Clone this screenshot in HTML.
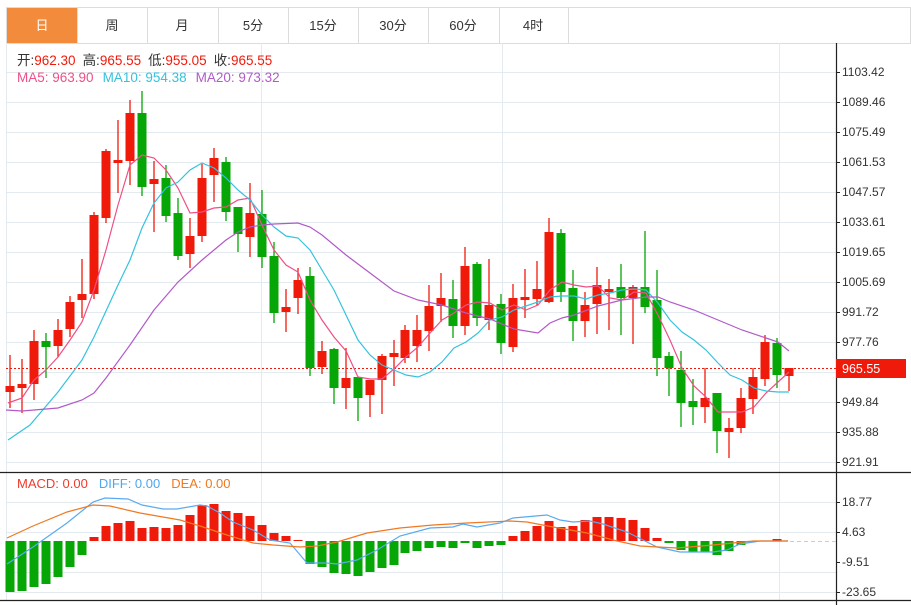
<!DOCTYPE html>
<html><head><meta charset="utf-8"><style>
body{margin:0;background:#fff;width:911px;height:605px;overflow:hidden;font-family:"Liberation Sans","Noto Sans CJK SC",sans-serif}
svg{position:absolute;left:0;top:0}
</style></head><body>
<svg width="911" height="605" xmlns="http://www.w3.org/2000/svg" font-family="Liberation Sans, Noto Sans CJK SC, sans-serif">
<rect x="6.5" y="7.5" width="904" height="36" fill="#fff" stroke="#dcdcdc"/>
<rect x="7" y="8" width="70" height="35" fill="#f28c3c"/>
<g stroke="#dcdcdc"><path d="M77.5 8V43M147.5 8V43M218.5 8V43M288.5 8V43M358.5 8V43M428.5 8V43M499.5 8V43M568.5 8V43"/></g>
<g font-size="13" fill="#333" text-anchor="middle">
<text x="42" y="30" fill="#fff">日</text><text x="112" y="30">周</text><text x="182" y="30">月</text><text x="253" y="30">5分</text><text x="323" y="30">15分</text><text x="393" y="30">30分</text><text x="463" y="30">60分</text><text x="533" y="30">4时</text>
</g>
<g stroke="#e3ebf1" stroke-width="1">
<path d="M6 72.5H836M6 102.5H836M6 132.5H836M6 162.5H836M6 192.5H836M6 222.5H836M6 252.5H836M6 282.5H836M6 312.5H836M6 342.5H836M6 372.5H836M6 402.5H836M6 432.5H836M6 462.5H836"/>
<path d="M6 502.5H836M6 532.5H836M6 572.5H836M6 592.5H836"/>
<path d="M261.5 43V600M502.5 43V600M779.5 43V600M6.5 43V600"/>
</g>
<path d="M836.5 43V605M0 472.5H911M0 600.5H911" stroke="#222" stroke-width="1.2"/>
<g stroke="#222"><path d="M836 72.5h4M836 102.5h4M836 132.5h4M836 162.5h4M836 192.5h4M836 222.5h4M836 252.5h4M836 282.5h4M836 312.5h4M836 342.5h4M836 402.5h4M836 432.5h4M836 462.5h4M836 502.5h4M836 532.5h4M836 562.5h4M836 592.5h4"/></g>
<g font-size="12" fill="#333">
<text x="842" y="76">1103.42</text><text x="842" y="106">1089.46</text><text x="842" y="136">1075.49</text><text x="842" y="166">1061.53</text><text x="842" y="196">1047.57</text><text x="842" y="226">1033.61</text><text x="842" y="256">1019.65</text><text x="842" y="286">1005.69</text><text x="842" y="316">991.72</text><text x="842" y="346">977.76</text><text x="842" y="406">949.84</text><text x="842" y="436">935.88</text><text x="842" y="466">921.91</text>
<text x="842" y="506">18.77</text><text x="842" y="536">4.63</text><text x="842" y="566">-9.51</text><text x="842" y="596">-23.65</text>
</g>
<g font-size="13.5">
<text x="17" y="65"><tspan fill="#333">开:</tspan><tspan fill="#f01a0a">962.30</tspan><tspan fill="#333" dx="7">高:</tspan><tspan fill="#f01a0a">965.55</tspan><tspan fill="#333" dx="7">低:</tspan><tspan fill="#f01a0a">955.05</tspan><tspan fill="#333" dx="7">收:</tspan><tspan fill="#f01a0a">965.55</tspan></text>
<text x="17" y="82"><tspan fill="#ef4f86">MA5: 963.90</tspan><tspan fill="#35c2dd" dx="9">MA10: 954.38</tspan><tspan fill="#b25ac8" dx="9">MA20: 973.32</tspan></text>
<text x="17" y="488" font-size="13"><tspan fill="#f03a2a">MACD: 0.00</tspan><tspan fill="#4ea6ee" dx="11">DIFF: 0.00</tspan><tspan fill="#f07820" dx="11">DEA: 0.00</tspan></text>
</g>
<path d="M6 368.5H836" stroke="#f01a0a" stroke-dasharray="2,2"/>
<rect x="836" y="359" width="70" height="19" fill="#f01a0a"/>
<text x="842" y="373" font-size="12.5" fill="#fff">965.55</text>
<path stroke="#f01a0a" stroke-width="1.3" fill="none" d="M10 355V408M22 359V413M34 330V400M58 319V357M70 296V337M82 259V318M94 212V299M106 149V223M118 120V193M130 100V185M154 161V232M190 218V268M202 164V242M214 148V202M250 183V257M286 289V332M298 268V314M322 341V374M346 348V409M370 380V417M382 354V414M394 340V386M405 325V363M417 315V362M429 285V351M441 273V322M465 247V335M489 259V330M513 284V352M525 269V318M537 261V305M549 218V303M585 292V337M597 267V334M609 279V330M633 285V344M705 368V423M729 418V458M741 388V433M753 368V414M765 335V386M789 368V391"/>
<g fill="#f01a0a">
<rect x="5.5" y="386" width="9" height="6"/><rect x="17.5" y="384" width="9" height="4"/><rect x="29.5" y="341" width="9" height="43"/><rect x="53.5" y="330" width="9" height="16"/><rect x="65.5" y="302" width="9" height="27"/><rect x="77.5" y="294" width="9" height="6"/><rect x="89.5" y="215" width="9" height="79"/><rect x="101.5" y="151" width="9" height="67"/><rect x="113.5" y="160" width="9" height="3"/><rect x="125.5" y="113" width="9" height="48"/><rect x="149.5" y="179" width="9" height="5"/><rect x="185.5" y="236" width="9" height="18"/><rect x="197.5" y="178" width="9" height="58"/><rect x="209.5" y="158" width="9" height="17"/><rect x="245.5" y="213" width="9" height="24"/><rect x="281.5" y="307" width="9" height="5"/><rect x="293.5" y="280" width="9" height="18"/><rect x="317.5" y="351" width="9" height="16"/><rect x="341.5" y="378" width="9" height="10"/><rect x="365.5" y="380" width="9" height="15"/><rect x="377.5" y="356" width="9" height="24"/><rect x="389.5" y="353" width="9" height="4"/><rect x="400.5" y="330" width="9" height="28"/><rect x="412.5" y="330" width="9" height="16"/><rect x="424.5" y="306" width="9" height="25"/><rect x="436.5" y="298" width="9" height="8"/><rect x="460.5" y="266" width="9" height="60"/><rect x="484.5" y="305" width="9" height="15"/><rect x="508.5" y="298" width="9" height="49"/><rect x="520.5" y="297" width="9" height="3"/><rect x="532.5" y="289" width="9" height="10"/><rect x="544.5" y="232" width="9" height="70"/><rect x="580.5" y="305" width="9" height="16"/><rect x="592.5" y="285" width="9" height="19"/><rect x="604.5" y="289" width="9" height="3"/><rect x="628.5" y="287" width="9" height="11"/><rect x="700.5" y="398" width="9" height="9"/><rect x="724.5" y="428" width="9" height="4"/><rect x="736.5" y="398" width="9" height="30"/><rect x="748.5" y="377" width="9" height="22"/><rect x="760.5" y="342" width="9" height="37"/><rect x="784.5" y="368" width="9" height="8"/>
</g>
<path stroke="#05a605" stroke-width="1.3" fill="none" d="M46 333V378M142 91V196M166 165V222M178 198V260M226 157V221M238 207V252M262 190V268M274 242V323M310 267V376M334 348V404M358 377V421M453 280V338M477 262V326M501 294V354M561 229V302M573 270V341M621 264V335M645 231V313M657 270V376M669 352V396M681 351V427M693 379V425M717 393V453M777 338V388"/>
<g fill="#05a605">
<rect x="41.5" y="341" width="9" height="6"/><rect x="137.5" y="113" width="9" height="74"/><rect x="161.5" y="178" width="9" height="38"/><rect x="173.5" y="213" width="9" height="43"/><rect x="221.5" y="162" width="9" height="50"/><rect x="233.5" y="207" width="9" height="27"/><rect x="257.5" y="214" width="9" height="43"/><rect x="269.5" y="256" width="9" height="57"/><rect x="305.5" y="276" width="9" height="92"/><rect x="329.5" y="349" width="9" height="39"/><rect x="353.5" y="377" width="9" height="21"/><rect x="448.5" y="299" width="9" height="27"/><rect x="472.5" y="264" width="9" height="54"/><rect x="496.5" y="304" width="9" height="39"/><rect x="556.5" y="233" width="9" height="59"/><rect x="568.5" y="288" width="9" height="33"/><rect x="616.5" y="287" width="9" height="11"/><rect x="640.5" y="287" width="9" height="20"/><rect x="652.5" y="300" width="9" height="58"/><rect x="664.5" y="356" width="9" height="12"/><rect x="676.5" y="370" width="9" height="33"/><rect x="688.5" y="401" width="9" height="6"/><rect x="712.5" y="393" width="9" height="38"/><rect x="772.5" y="343" width="9" height="32"/>
</g>
<g fill="none" stroke-width="1.2">
<polyline stroke="#ef4f86" points="8,403 22,398 34,380 46,370 58,357 70,340 82,322 94,290 106,250 118,205 130,165 142,155 154,158 166,170 178,188 190,213 202,212 214,208 226,207 238,200 250,198 262,225 274,250 286,265 298,272 310,300 322,320 334,337 346,351 358,377 370,379 382,379 394,369 406,357 418,347 430,333 442,320 454,313 466,305 478,302 490,303 502,310 514,305 526,310 538,305 550,290 562,282 574,285 586,287 598,286 610,298 622,300 634,292 646,293 658,315 670,340 682,368 694,386 706,397 718,412 730,412 742,412 754,407 766,393 778,382 789,372"/>
<polyline stroke="#35c2dd" points="8,440 30,425 58,392 82,360 94,337 118,285 130,260 142,228 154,203 166,188 178,182 190,170 202,163 214,168 226,178 238,190 250,200 262,215 274,227 286,236 298,238 310,250 322,270 334,290 346,315 358,340 370,355 382,365 394,370 406,375 418,377 430,372 442,362 454,348 466,342 478,333 490,320 502,317 514,310 526,306 538,302 550,297 562,296 574,296 586,299 598,295 610,293 622,290 634,289 646,290 658,303 670,320 682,332 694,340 706,350 718,363 730,375 742,380 754,388 766,391 778,392 789,392"/>
<polyline stroke="#b25ac8" points="6,410 22,411 34,410 58,408 82,400 94,393 106,378 130,345 154,310 178,282 202,260 214,250 226,240 238,232 250,227 262,225 274,224 298,223 310,227 322,235 346,255 370,273 394,291 418,300 442,305 466,313 490,319 514,329 538,333 550,323 562,318 574,315 598,306 622,300 646,297 658,297 670,302 694,310 718,320 742,330 766,338 778,342 789,351"/>
</g>
<path d="M790 541.5H836" stroke="#a8d8ee" stroke-dasharray="4,3"/>
<g fill="#f01a0a">
<rect x="89.5" y="537" width="9" height="4"/><rect x="101.5" y="526" width="9" height="15"/><rect x="113.5" y="523" width="9" height="18"/><rect x="125.5" y="521" width="9" height="20"/><rect x="137.5" y="528" width="9" height="13"/><rect x="149.5" y="527" width="9" height="14"/><rect x="161.5" y="528" width="9" height="13"/><rect x="173.5" y="525" width="9" height="16"/><rect x="185.5" y="515" width="9" height="26"/><rect x="197.5" y="505" width="9" height="36"/><rect x="209.5" y="504" width="9" height="37"/><rect x="221.5" y="511" width="9" height="30"/><rect x="233.5" y="513" width="9" height="28"/><rect x="245.5" y="516" width="9" height="25"/><rect x="257.5" y="525" width="9" height="16"/><rect x="269.5" y="533" width="9" height="8"/><rect x="281.5" y="536" width="9" height="5"/><rect x="293.5" y="540" width="9" height="1"/>
<rect x="508.5" y="536" width="9" height="5"/><rect x="520.5" y="531" width="9" height="10"/><rect x="532.5" y="526" width="9" height="15"/><rect x="544.5" y="521" width="9" height="20"/><rect x="556.5" y="527" width="9" height="14"/><rect x="568.5" y="526" width="9" height="15"/><rect x="580.5" y="520" width="9" height="21"/><rect x="592.5" y="517" width="9" height="24"/><rect x="604.5" y="517" width="9" height="24"/><rect x="616.5" y="518" width="9" height="23"/><rect x="628.5" y="520" width="9" height="21"/><rect x="640.5" y="528" width="9" height="13"/><rect x="652.5" y="538" width="9" height="3"/><rect x="772.5" y="539" width="9" height="2"/>
</g>
<g fill="#05a605">
<rect x="5.5" y="541" width="9" height="51"/><rect x="17.5" y="541" width="9" height="50"/><rect x="29.5" y="541" width="9" height="46"/><rect x="41.5" y="541" width="9" height="43"/><rect x="53.5" y="541" width="9" height="36"/><rect x="65.5" y="541" width="9" height="26"/><rect x="77.5" y="541" width="9" height="14"/>
<rect x="305.5" y="541" width="9" height="23"/><rect x="317.5" y="541" width="9" height="26"/><rect x="329.5" y="541" width="9" height="32"/><rect x="341.5" y="541" width="9" height="33"/><rect x="353.5" y="541" width="9" height="35"/><rect x="365.5" y="541" width="9" height="31"/><rect x="377.5" y="541" width="9" height="27"/><rect x="389.5" y="541" width="9" height="24"/><rect x="400.5" y="541" width="9" height="12"/><rect x="412.5" y="541" width="9" height="10"/><rect x="424.5" y="541" width="9" height="7"/><rect x="436.5" y="541" width="9" height="6"/><rect x="448.5" y="541" width="9" height="7"/><rect x="460.5" y="541" width="9" height="2"/><rect x="472.5" y="541" width="9" height="7"/><rect x="484.5" y="541" width="9" height="5"/><rect x="496.5" y="541" width="9" height="4"/>
<rect x="664.5" y="541" width="9" height="2"/><rect x="676.5" y="541" width="9" height="9"/><rect x="688.5" y="541" width="9" height="11"/><rect x="700.5" y="541" width="9" height="11"/><rect x="712.5" y="541" width="9" height="14"/><rect x="724.5" y="541" width="9" height="10"/><rect x="736.5" y="541" width="9" height="4"/>
</g>
<g fill="none" stroke-width="1.2">
<polyline stroke="#5aaaf0" points="7,564 33,547 67,523 93,502 105,498 128,499 142,505 163,509 177,509 200,505 207,506 220,513 233,522 253,530 270,540 290,543 307,563 327,563 337,564 357,560 377,550 400,536 430,528 453,527 463,524 477,527 500,523 513,518 547,515 560,520 573,522 590,521 603,524 627,532 643,540 657,547 680,552 713,552 727,550 740,544 760,541 788,541"/>
<polyline stroke="#f07820" points="7,538 33,526 67,512 93,505 110,506 140,513 180,520 200,526 227,535 253,543 273,545 300,547 317,546 337,542 367,533 400,528 433,525 467,523 510,521 527,522 553,527 587,533 617,541 640,546 677,548 713,545 753,541 788,541"/>
</g>
</svg>
</body></html>
